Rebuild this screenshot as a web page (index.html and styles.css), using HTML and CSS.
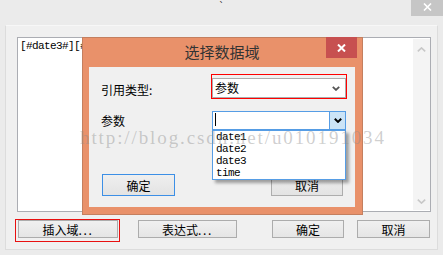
FILE: index.html
```html
<!DOCTYPE html>
<html>
<head>
<meta charset="utf-8">
<link rel="stylesheet" href="styles.css">
</head>
<body>
<div class="window">
  <div class="titlebar">
    <span class="wtitle">`</span>
    <div class="wclose">
      <svg width="9" height="8" viewBox="0 0 9 8"><path d="M1 0.5 L8 7.5 M8 0.5 L1 7.5" stroke="#fff" stroke-width="1.6"/></svg>
    </div>
  </div>
  <div class="panel">
    <div class="editor">
      <div class="editor-text">[#date3#][#</div>
      <div class="vscroll">
        <svg width="9" height="5" viewBox="0 0 9 5"><polyline points="0.8,4.4 4.5,0.9 8.2,4.4" fill="none" stroke="#c8c8c8" stroke-width="1.6"/></svg>
        <svg width="9" height="5" viewBox="0 0 9 5"><polyline points="0.8,0.6 4.5,4.1 8.2,0.6" fill="none" stroke="#c8c8c8" stroke-width="1.6"/></svg>
      </div>
    </div>
    <div class="actions">
      <button class="btn btn-insert">插入域<span class="dots">...</span></button>
      <button class="btn btn-expr">表达式<span class="dots">...</span></button>
      <button class="btn btn-ok">确定</button>
      <button class="btn btn-cancel">取消</button>
    </div>
  </div>
  <div class="mark-insert"></div>

  <div class="dialog">
    <div class="dtitle">选择数据域</div>
    <div class="dclose">
      <svg width="9" height="8" viewBox="0 0 9 8"><path d="M1 0.5 L8 7.5 M8 0.5 L1 7.5" stroke="#fff" stroke-width="2"/></svg>
    </div>
    <div class="client">
      <div class="row row-type">
        <span class="label label-type">引用类型:</span>
        <div class="flag">
          <div class="combo">
            <span class="combo-value">参数</span>
            <svg class="chev" width="8" height="5" viewBox="0 0 8 5"><polyline points="0.8,0.8 4,3.9 7.2,0.8" fill="none" stroke="#555" stroke-width="1.8"/></svg>
          </div>
        </div>
      </div>
      <div class="row row-param">
        <span class="label">参数</span>
        <div class="combo-wrap">
          <div class="combo combo-open">
            <span class="caret"></span>
            <span class="drop-btn">
              <svg width="8" height="5" viewBox="0 0 8 5"><polyline points="0.8,0.8 4,3.9 7.2,0.8" fill="none" stroke="#000" stroke-width="2"/></svg>
            </span>
          </div>
          <ul class="listbox">
            <li>date1</li>
            <li>date2</li>
            <li>date3</li>
            <li>time</li>
          </ul>
        </div>
      </div>
      <div class="drow">
        <button class="dbtn dbtn-ok">确定</button>
        <button class="dbtn dbtn-cancel">取消</button>
      </div>
    </div>
  </div>

  <div class="watermark">http://blog.csdn.net/u010191034</div>
</div>
</body>
</html>
```

FILE: styles.css
```css
* {
  box-sizing: border-box;
  margin: 0;
  padding: 0;
}

html,
body {
  width: 443px;
  height: 255px;
  overflow: hidden;
}

body {
  font-family: "Noto Sans CJK SC", "Noto Sans", sans-serif;
  font-size: 12px;
  color: #000;
  background: #ebebeb;
}

.window {
  position: relative;
  width: 443px;
  height: 255px;
  background: #ebebeb;
}

/* outer window title bar */
.titlebar {
  display: flex;
  height: 25px;
}

.wtitle {
  flex: 1;
  padding-left: 32px;
  padding-top: 1px;
  text-align: center;
  font-family: "DejaVu Sans", sans-serif;
  font-size: 10px;
  line-height: 12px;
  color: #333;
}

.wclose {
  width: 32px;
  height: 16px;
  background: #c6c6c6;
  display: flex;
  align-items: center;
  justify-content: center;
  padding-bottom: 3px;
}

/* main panel */
.panel {
  height: 225px;
  margin: 0 5px;
  padding: 11px 6px 0 11px;
  background: #f0f0f0;
  border: 1px solid #dcdcdc;
  border-top-color: #f7f7f7;
}

.editor {
  display: flex;
  height: 175px;
  background: #fff;
  border: 1px solid #abadb3;
}

.editor-text {
  flex: 1;
  padding: 1px 2px;
  font-family: "Liberation Mono", monospace;
  font-size: 11px;
  letter-spacing: -0.6px;
  line-height: 14px;
}

.vscroll {
  width: 17px;
  margin: 1px 0;
  background: #f4f4f4;
  display: flex;
  flex-direction: column;
  align-items: center;
  justify-content: space-between;
  padding: 8px 0 6px;
}

.actions {
  display: flex;
  margin-top: 8px;
  padding: 0 1px;
}

.btn {
  height: 18px;
  border: 1px solid #acacac;
  background: linear-gradient(#f0f0f0, #e5e5e5);
  font-family: "Noto Sans CJK SC", "Noto Sans", sans-serif;
  font-size: 12px;
  line-height: 15px;
  color: #000;
  text-align: center;
}

.dots {
  letter-spacing: 1.6px;
}

.btn-insert {
  width: 100px;
}

.btn-expr {
  width: 99px;
  margin-left: 20px;
}

.btn-ok {
  width: 72px;
  margin-left: auto;
}

.btn-cancel {
  width: 73px;
  margin-left: 13px;
}

/* red annotation */
.mark-insert {
  position: absolute;
  left: 15px;
  top: 219px;
  width: 105px;
  height: 23px;
  border: 1px solid #e81010;
}

/* dialog */
.dialog {
  position: absolute;
  left: 82px;
  top: 37px;
  width: 281px;
  height: 178px;
  background: #e9916a;
  border: 1px solid #c47f5f;
  padding: 0 7px 7px 6px;
}

.dtitle {
  height: 29px;
  line-height: 28px;
  text-align: center;
  font-size: 15px;
  color: #333;
}

.dclose {
  position: absolute;
  top: -1px;
  right: 5px;
  width: 31px;
  height: 21px;
  background: #c75050;
  display: flex;
  align-items: center;
  justify-content: center;
}

.client {
  height: 140px;
  background: #f0f0f0;
  padding: 7px 9px 11px 12px;
}

.row {
  display: grid;
  grid-template-columns: 111px 134px;
  align-items: center;
}

.row-type {
  height: 25px;
}

.label-type {
  padding-top: 6px;
}

.label {
  font-size: 12px;
  line-height: 14px;
  color: #000;
}

.flag {
  width: 136px;
  height: 25px;
  margin-left: -1px;
  border: 1px solid #f00;
  padding-top: 3px;
}

.combo {
  display: flex;
  align-items: center;
  width: 134px;
  height: 20px;
  background: #fff;
  border: 1px solid #acacac;
}

.combo-value {
  flex: 1;
  padding-left: 2px;
  font-size: 12px;
  line-height: 16px;
}

.chev {
  margin-right: 5px;
  margin-top: 1px;
}

.row-param {
  margin-top: 12px;
  height: 19px;
}

.combo-wrap {
  position: relative;
  height: 19px;
}

.combo-open {
  height: 19px;
  border-color: #569de5;
  align-items: stretch;
}

.caret {
  flex: 1;
  position: relative;
}

.caret::before {
  content: "";
  position: absolute;
  left: 2px;
  top: 1px;
  width: 1px;
  height: 13px;
  background: #000;
}

.drop-btn {
  width: 16px;
  background: #cce4f7;
  border-left: 1px solid #569de5;
  display: flex;
  align-items: center;
  justify-content: center;
}

.listbox {
  position: absolute;
  left: 0;
  top: 19px;
  width: 134px;
  height: 50px;
  list-style: none;
  background: #fff;
  border: 1px solid #569de5;
  box-shadow: 3px 3px 3px rgba(0, 0, 0, 0.35);
  padding: 0 3px;
  z-index: 2;
}

.listbox li {
  height: 12px;
  font-family: "Liberation Mono", monospace;
  font-size: 11px;
  letter-spacing: -0.6px;
  line-height: 12px;
}

.drow {
  display: flex;
  margin-top: 44px;
  padding-left: 1px;
}

.dbtn {
  height: 22px;
  border: 1px solid #adadad;
  background: linear-gradient(#efefef, #e3e3e3);
  font-family: "Noto Sans CJK SC", "Noto Sans", sans-serif;
  font-size: 12px;
  line-height: 19px;
  color: #000;
  text-align: center;
}

.dbtn-ok {
  width: 73px;
  border-color: #3c8fe6;
}

.dbtn-cancel {
  width: 72px;
  margin-left: 96px;
}

/* watermark overlay */
.watermark {
  position: absolute;
  left: 80px;
  top: 127px;
  font-family: "Liberation Serif", serif;
  font-size: 19px;
  letter-spacing: 1.9px;
  color: rgba(140, 140, 140, 0.42);
  white-space: nowrap;
  z-index: 5;
  pointer-events: none;
}
```
